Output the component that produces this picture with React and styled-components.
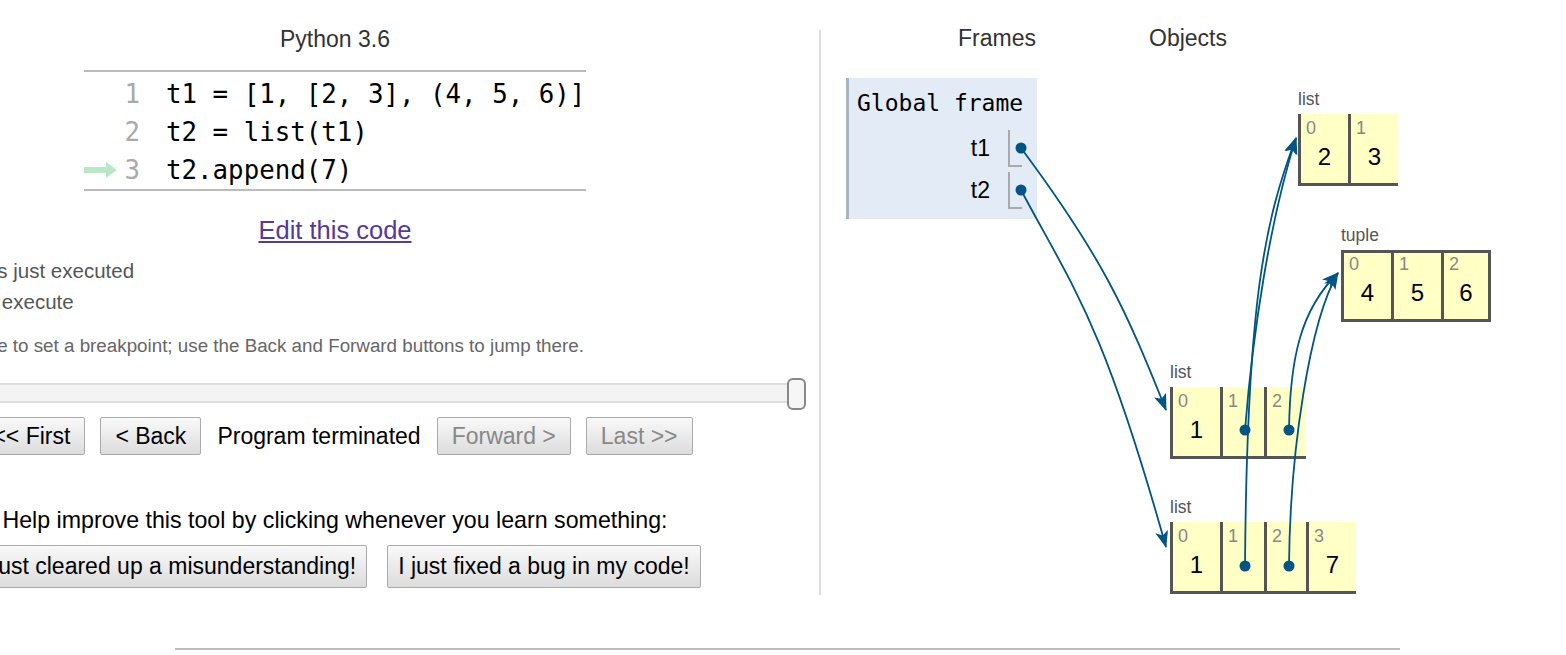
import React from "react";
import styled, { createGlobalStyle, css } from "styled-components";

const GlobalStyle = createGlobalStyle`
  html, body {
    margin: 0;
    padding: 0;
    background: #fff;
    overflow: hidden;
  }
  body {
    font-family: "Liberation Sans", Arial, sans-serif;
  }
`;

const ARROW_BLUE = "#005583";

const Page = styled.div`
  display: flex;
  flex-direction: column;
  width: 1566px;
`;

const MainRow = styled.div`
  display: flex;
  align-items: flex-start;
  height: 648px;
  margin-left: -136px;
`;

const LeftPanel = styled.div`
  width: 942px;
  flex-shrink: 0;
  display: flex;
  flex-direction: column;
  align-items: center;
`;

const Title = styled.div`
  margin-top: 26px;
  font-size: 23px;
  line-height: 26px;
  color: #333;
`;

const CodeBox = styled.div`
  margin-top: 18px;
  width: 502px;
  border-top: 2px solid #bbb;
  border-bottom: 2px solid #bbb;
  padding-top: 3px;
`;

const CodeLine = styled.div`
  display: flex;
  align-items: center;
  height: 38px;
  font-family: "DejaVu Sans Mono", monospace;
  font-size: 25.8px;
`;

const ArrowCell = styled.div`
  width: 36px;
  height: 38px;
  display: flex;
  align-items: center;
`;

const LineNo = styled.span`
  width: 20px;
  text-align: right;
  color: #aaa;
`;

const CodeText = styled.span`
  margin-left: 26px;
  color: #000;
  white-space: pre;
`;

const EditLink = styled.a`
  margin-top: 24px;
  font-size: 25.5px;
  line-height: 30px;
  color: #55399c;
  text-decoration: underline;
  cursor: pointer;
`;

const Legend = styled.div`
  align-self: stretch;
  margin-top: 10px;
  font-size: 20.5px;
  line-height: 31px;
  color: #555;
`;

const LegendItem = styled.div`
  display: flex;
  align-items: center;
  gap: 5px;
`;

const Hint = styled.div`
  align-self: stretch;
  margin-top: 18px;
  margin-left: -14px;
  font-size: 18.8px;
  line-height: 22px;
  color: #666;
  white-space: nowrap;
`;

const Slider = styled.div`
  position: relative;
  align-self: stretch;
  height: 32px;
  margin-top: 21px;
`;

const SliderTrack = styled.div`
  margin-top: 5px;
  margin-right: 9px;
  height: 20px;
  box-sizing: border-box;
  background: #f3f3f3;
  border-top: 2px solid #ddd;
  border-bottom: 2px solid #ddd;
`;

const SliderThumb = styled.div`
  position: absolute;
  right: 0;
  top: 0;
  width: 19px;
  height: 32px;
  box-sizing: border-box;
  border: 2px solid #888;
  border-radius: 6px;
  background: #f6f6f6;
`;

const NavRow = styled.div`
  margin-top: 7px;
  display: flex;
  align-items: center;
  gap: 15px;
`;

const Button = styled.button`
  font-family: "Liberation Sans", Arial, sans-serif;
  font-size: 23px;
  height: ${(p) => p.$height}px;
  padding: 0 ${(p) => p.$pad}px;
  border: 1px solid #aaa;
  border-radius: 2px;
  background: linear-gradient(#f9f9f9, #dcdcdc);
  color: ${(p) => (p.disabled ? "#888" : "#000")};
  white-space: nowrap;
`;

const Status = styled.span`
  font-size: 23px;
  margin: 0 1px;
  color: #000;
`;

const HelpText = styled.div`
  margin-top: 52px;
  font-size: 23.2px;
  line-height: 26px;
  color: #000;
  white-space: nowrap;
`;

const HelpRow = styled.div`
  margin-top: 12px;
  display: flex;
  gap: 20px;
`;

const Divider = styled.div`
  flex-shrink: 0;
  width: 2px;
  height: 565px;
  margin-top: 30px;
  margin-left: 13px;
  background: #ddd;
`;

const RightPanel = styled.div`
  position: relative;
  width: 745px;
  height: 648px;
  flex-shrink: 0;
`;

const HeaderRow = styled.div`
  display: flex;
  padding-top: 25px;
  padding-left: 25px;
`;

const HeaderCell = styled.div`
  width: ${(p) => p.$width}px;
  text-align: center;
  font-size: 23px;
  line-height: 26px;
  color: #333;
`;

const Frame = styled.div`
  margin-top: 27px;
  margin-left: 25px;
  width: 191px;
  box-sizing: border-box;
  background: #e2ebf6;
  border-left: 3px solid #a8b4be;
  padding: 12px 15px 10px 8px;
`;

const FrameTitle = styled.div`
  font-family: "DejaVu Sans Mono", monospace;
  font-size: 23px;
  line-height: 26px;
  color: #000;
  white-space: nowrap;
`;

const VarList = styled.div`
  margin-top: 14px;
  display: flex;
  flex-direction: column;
  gap: 5px;
`;

const VarRow = styled.div`
  display: flex;
  justify-content: flex-end;
  align-items: center;
`;

const VarName = styled.span`
  font-size: 23px;
  margin-right: 18px;
  color: #000;
`;

const VarSlot = styled.div`
  width: 14px;
  height: 37px;
  box-sizing: border-box;
  border-left: 2px solid #aaa;
  border-bottom: 2px solid #aaa;
`;

const HeapObject = styled.div`
  position: absolute;
  left: ${(p) => p.$x}px;
  top: ${(p) => p.$y}px;
`;

const TypeLabel = styled.div`
  font-size: 17.5px;
  line-height: 20px;
  color: #555;
  margin-bottom: 5px;
`;

const Cells = styled.div`
  display: flex;
  background: #ffffc6;
  border-bottom: 3px solid #555;
  ${(p) =>
    p.$tuple &&
    css`
      border-top: 3px solid #555;
      border-right: 3px solid #555;
    `}
`;

const Cell = styled.div`
  width: ${(p) => p.$w}px;
  height: ${(p) => (p.$tuple ? 66 : 69)}px;
  box-sizing: border-box;
  border-left: 3px solid #555;
  padding: ${(p) => (p.$tuple ? 2 : 5)}px 0 0 5px;
  display: flex;
  flex-direction: column;
`;

const CellIndex = styled.span`
  font-size: 18px;
  line-height: 18px;
  color: #888;
`;

const CellValue = styled.span`
  margin-top: 6px;
  margin-left: -5px;
  font-size: 24px;
  line-height: 28px;
  text-align: center;
  color: #000;
`;

const ArrowLayer = styled.svg`
  position: absolute;
  left: 0;
  top: 0;
  pointer-events: none;
`;

const Footer = styled.div`
  margin-left: 175px;
  width: 1225px;
  border-top: 2px solid #bbb;
`;

const GreenArrow = () => (
  <svg width="34" height="16" viewBox="0 0 34 16">
    <rect x="0" y="5" width="23" height="6" fill="#b8e8c8" />
    <polygon points="22,0 33,8 22,16" fill="#b8e8c8" />
  </svg>
);

const code = [
  "t1 = [1, [2, 3], (4, 5, 6)]",
  "t2 = list(t1)",
  "t2.append(7)",
];

const heap = [
  { x: 477, y: 89, type: "list", cells: [{ w: 50, v: "2" }, { w: 50, v: "3" }] },
  {
    x: 520,
    y: 225,
    type: "tuple",
    tuple: true,
    cells: [{ w: 50, v: "4" }, { w: 50, v: "5" }, { w: 47, v: "6" }],
  },
  {
    x: 349,
    y: 362,
    type: "list",
    cells: [{ w: 50, v: "1" }, { w: 44, v: "" }, { w: 42, v: "" }],
  },
  {
    x: 349,
    y: 497,
    type: "list",
    cells: [{ w: 50, v: "1" }, { w: 44, v: "" }, { w: 42, v: "" }, { w: 50, v: "7" }],
  },
];

// connector curves, in page coordinates
const connectors = [
  { from: [1021, 148], d: "M1021,148 C1103,258 1126,310 1166,410" },
  { from: [1021, 190], d: "M1021,190 C1073,288 1102,319 1166,547" },
  { from: [1245, 430], d: "M1245,430 C1253,330 1270,220 1296,138" },
  { from: [1245, 566], d: "M1245,566 C1247,300 1265,220 1296,138" },
  { from: [1289, 430], d: "M1289,430 C1290,360 1300,310 1338,273" },
  { from: [1289, 566], d: "M1289,566 C1290,450 1310,320 1338,273" },
];

const App = () => {
  return (
    <Page>
      <GlobalStyle />
      <MainRow>
        <LeftPanel>
          <Title>Python 3.6</Title>
          <CodeBox>
            {code.map((line, i) => (
              <CodeLine key={i}>
                <ArrowCell>{i === 2 && <GreenArrow />}</ArrowCell>
                <LineNo>{i + 1}</LineNo>
                <CodeText>{line}</CodeText>
              </CodeLine>
            ))}
          </CodeBox>
          <EditLink>Edit this code</EditLink>
          <Legend>
            <LegendItem>
              <svg width="28" height="14" />
              <span>line that has just executed</span>
            </LegendItem>
            <LegendItem>
              <svg width="28" height="14" />
              <span>next line to execute</span>
            </LegendItem>
          </Legend>
          <Hint>
            Click a line of code to set a breakpoint; use the Back and Forward
            buttons to jump there.
          </Hint>
          <Slider>
            <SliderTrack />
            <SliderThumb />
          </Slider>
          <NavRow>
            <Button $height={38} $pad={14}>&lt;&lt; First</Button>
            <Button $height={38} $pad={14}>&lt; Back</Button>
            <Status>Program terminated</Status>
            <Button $height={38} $pad={14} disabled>Forward &gt;</Button>
            <Button $height={38} $pad={14} disabled>Last &gt;&gt;</Button>
          </NavRow>
          <HelpText>
            Help improve this tool by clicking whenever you learn something:
          </HelpText>
          <HelpRow>
            <Button $height={43} $pad={10}>I just cleared up a misunderstanding!</Button>
            <Button $height={43} $pad={10}>I just fixed a bug in my code!</Button>
          </HelpRow>
        </LeftPanel>
        <Divider />
        <RightPanel>
          <HeaderRow>
            <HeaderCell $width={302}>Frames</HeaderCell>
            <HeaderCell $width={80}>Objects</HeaderCell>
          </HeaderRow>
          <Frame>
            <FrameTitle>Global frame</FrameTitle>
            <VarList>
              <VarRow>
                <VarName>t1</VarName>
                <VarSlot />
              </VarRow>
              <VarRow>
                <VarName>t2</VarName>
                <VarSlot />
              </VarRow>
            </VarList>
          </Frame>
          {heap.map((obj, i) => (
            <HeapObject key={i} $x={obj.x} $y={obj.y}>
              <TypeLabel>{obj.type}</TypeLabel>
              <Cells $tuple={obj.tuple}>
                {obj.cells.map((c, j) => (
                  <Cell key={j} $w={c.w} $tuple={obj.tuple}>
                    <CellIndex>{j}</CellIndex>
                    <CellValue>{c.v}</CellValue>
                  </Cell>
                ))}
              </Cells>
            </HeapObject>
          ))}
          <ArrowLayer width="745" height="648" viewBox="821 0 745 648">
            <defs>
              <marker
                id="head"
                markerUnits="userSpaceOnUse"
                markerWidth="18"
                markerHeight="13"
                refX="16"
                refY="6.5"
                orient="auto"
              >
                <path d="M0,0 L17,6.5 L0,13 L4,6.5 Z" fill={ARROW_BLUE} />
              </marker>
            </defs>
            {connectors.map((c, i) => (
              <g key={i}>
                <path
                  d={c.d}
                  fill="none"
                  stroke={ARROW_BLUE}
                  strokeWidth="1.8"
                  markerEnd="url(#head)"
                />
                <circle cx={c.from[0]} cy={c.from[1]} r="5.5" fill={ARROW_BLUE} />
              </g>
            ))}
          </ArrowLayer>
        </RightPanel>
      </MainRow>
      <Footer />
    </Page>
  );
};

export default App;
